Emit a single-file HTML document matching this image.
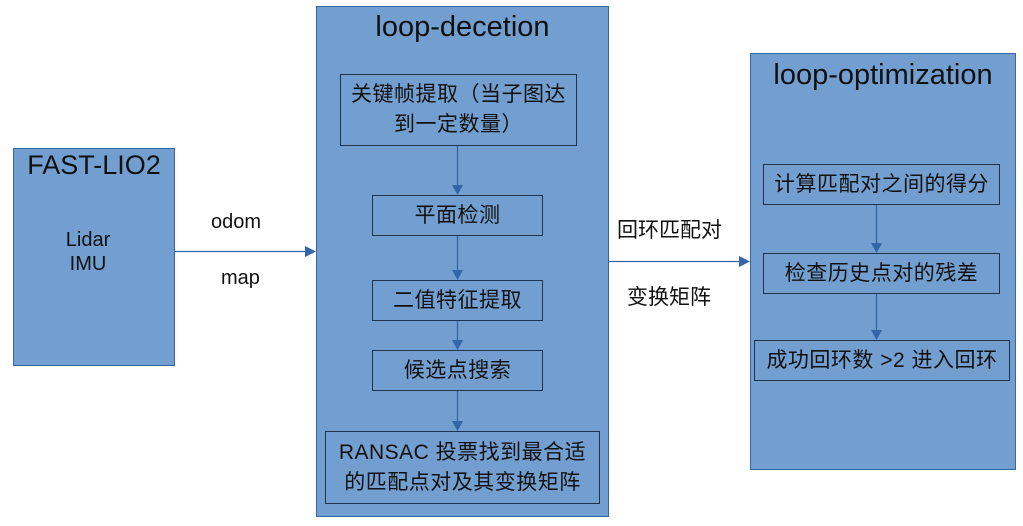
<!DOCTYPE html>
<html><head><meta charset="utf-8"><style>
body{margin:0;width:1023px;height:526px;background:#fff;position:relative;overflow:hidden;font-family:"Liberation Sans","Noto Sans CJK SC",sans-serif;color:#111}
.b{position:absolute;background:#729fcf;border:1px solid #3465a4;box-sizing:border-box}
.i{position:absolute;border:1.5px solid #1e3350;box-sizing:border-box;display:flex;align-items:center;justify-content:center;text-align:center;font-size:21px;line-height:30px;white-space:nowrap;letter-spacing:0.5px}
.t{position:absolute;font-size:29px;text-align:center;white-space:nowrap}
.l{position:absolute;font-size:20px;white-space:nowrap}
svg{position:absolute;left:0;top:0}
</style></head><body>
<div class="b" style="left:13px;top:148px;width:162px;height:218px"></div>
<div class="t" style="left:13px;top:150px;width:162px;font-size:27px">FAST-LIO2</div>
<div class="l" style="left:13px;top:228px;width:150px;text-align:center;line-height:24px">Lidar<br>IMU</div>

<div class="b" style="left:316px;top:6px;width:293px;height:511px"></div>
<div class="t" style="left:316px;top:11px;width:293px">loop-decetion</div>
<div class="i" style="left:340px;top:74px;width:237px;height:72px">关键帧提取（当子图达<br>到一定数量）</div>
<div class="i" style="left:372px;top:195px;width:171px;height:41px">平面检测</div>
<div class="i" style="left:372px;top:280px;width:171px;height:41px">二值特征提取</div>
<div class="i" style="left:372px;top:350px;width:171px;height:41px">候选点搜索</div>
<div class="i" style="left:325px;top:431px;width:275px;height:73px">RANSAC 投票找到最合适<br>的匹配点对及其变换矩阵</div>

<div class="b" style="left:750px;top:53px;width:266px;height:417px"></div>
<div class="t" style="left:750px;top:59px;width:266px">loop-optimization</div>
<div class="i" style="left:763px;top:164px;width:237px;height:41px">计算匹配对之间的得分</div>
<div class="i" style="left:763px;top:253px;width:237px;height:41px">检查历史点对的残差</div>
<div class="i" style="left:754px;top:340px;width:256px;height:41px">成功回环数 &gt;2 进入回环</div>

<div class="l" style="left:211px;top:211px">odom</div>
<div class="l" style="left:221px;top:267px">map</div>
<div class="l" style="left:617px;top:214px;font-size:21px">回环匹配对</div>
<div class="l" style="left:627px;top:281px;font-size:21px">变换矩阵</div>

<svg width="1023" height="526">
<g stroke="#3465a4" stroke-width="1.3" fill="none">
<line x1="175" y1="251.5" x2="306" y2="251.5"/>
<line x1="609" y1="261.5" x2="740" y2="261.5"/>
<line x1="457.5" y1="146" x2="457.5" y2="186"/>
<line x1="457.5" y1="236" x2="457.5" y2="271"/>
<line x1="457.5" y1="321" x2="457.5" y2="341"/>
<line x1="457.5" y1="391" x2="457.5" y2="422"/>
<line x1="876.5" y1="205" x2="876.5" y2="244"/>
<line x1="876.5" y1="294" x2="876.5" y2="331"/>
</g>
<g fill="#3465a4">
<polygon points="305,246 316,251.5 305,257"/>
<polygon points="739,256 750,261.5 739,267"/>
<polygon points="452,185 463,185 457.5,195"/>
<polygon points="452,270 463,270 457.5,280"/>
<polygon points="452,340 463,340 457.5,350"/>
<polygon points="452,421 463,421 457.5,431"/>
<polygon points="871,243 882,243 876.5,253"/>
<polygon points="871,330 882,330 876.5,340"/>
</g>
</svg>
</body></html>
